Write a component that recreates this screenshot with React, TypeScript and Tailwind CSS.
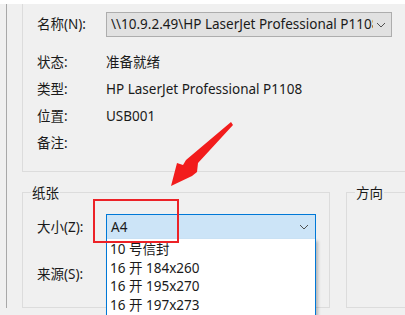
import React from "react";

const FONT = {
  fontFamily: '"Segoe UI", "Noto Sans", "Noto Sans CJK SC", sans-serif',
};

function Chevron({ className = "" }: { className?: string }) {
  return (
    <svg width="10" height="6" viewBox="0 0 10 6" className={className}>
      <path d="M1 1 L5 5 L9 1" fill="none" stroke="#505050" strokeWidth="1" />
    </svg>
  );
}

function InfoRow({ label, value }: { label: string; value?: string }) {
  return (
    <div className="flex h-[27px] items-center">
      <span className="w-[69px] shrink-0">{label}</span>
      <span>{value}</span>
    </div>
  );
}

const PAPER_SIZES = ["10 号信封", "16 开 184x260", "16 开 195x270", "16 开 197x273"];

export default function App() {
  return (
    <div
      className="relative h-[315px] w-[405px] overflow-hidden bg-[#f0f0f0] text-[13.5px] text-[#1a1a1a]"
      style={FONT}
    >
      {/* top white strip */}
      <div className="h-[4px] bg-white" />

      <div className="flex">
        {/* left window edge */}
        <div className="w-[7px] shrink-0 border-r border-[#a8a8a8]" />

        <div className="flex-1 pl-[15px]">
          {/* printer group */}
          <div className="w-[420px] border-b border-l border-[#dcdcdc] pb-[14px] pl-[14px] pt-[8px]">
            <div className="flex h-[25px] items-center">
              <span className="w-[69px] shrink-0">名称(N):</span>
              <div className="flex h-[25px] w-[286px] items-center border border-[#adadad] bg-[#e1e1e1] pl-[4px] pr-[5px]">
                <span className="flex-1 overflow-hidden whitespace-nowrap">
                  \\10.9.2.49\HP LaserJet Professional P1108
                </span>
                <Chevron className="ml-[3px] shrink-0" />
              </div>
            </div>
            <div className="mt-[12px]">
              <InfoRow label="状态:" value="准备就绪" />
              <InfoRow label="类型:" value="HP LaserJet Professional P1108" />
              <InfoRow label="位置:" value="USB001" />
              <InfoRow label="备注:" />
            </div>
          </div>

          {/* paper + orientation groups */}
          <div className="mt-[20px] flex gap-[16px]">
            <div className="relative h-[116px] w-[308px] shrink-0 border border-[#dcdcdc] pl-[14px] pt-[21px]">
              <span className="absolute -top-[10px] left-[8px] bg-[#f0f0f0] px-[1px]">纸张</span>
              <div className="flex h-[26px] items-center">
                <span className="w-[69px] shrink-0">大小(Z):</span>
                <div className="flex h-[26px] w-[210px] items-center border border-[#0078d7] bg-[#cce4f7] pl-[4px] pr-[6px]">
                  <span className="flex-1">A4</span>
                  <Chevron />
                </div>
              </div>
              <div className="mt-[21px] flex h-[26px] items-center">
                <span className="w-[69px] shrink-0">来源(S):</span>
              </div>
            </div>
            <div className="relative h-[116px] w-[80px] shrink-0 border border-[#dcdcdc]">
              <span className="absolute -top-[10px] left-[8px] bg-[#f0f0f0] px-[1px]">方向</span>
            </div>
          </div>
        </div>
      </div>

      {/* open dropdown list */}
      <div className="absolute left-[106px] top-[239px] h-[90px] w-[210px] border-x border-b border-[#0078d7] bg-white pl-[3px] pt-[1px] shadow-[2px_2px_3px_rgba(0,0,0,0.25)]">
        {PAPER_SIZES.map((s) => (
          <div key={s} className="flex h-[18.5px] items-center text-[13.5px]">
            {s}
          </div>
        ))}
      </div>

      {/* annotation: red box */}
      <div className="absolute left-[93px] top-[199px] h-[44px] w-[86px] border-[2.5px] border-[#ec2227]" />

      {/* annotation: red arrow */}
      <svg className="absolute left-0 top-0" width="405" height="315" viewBox="0 0 405 315">
        <polygon
          points="231,122 233,125 198,163 197,172 192,176 171,186 177,163 183,165 186,160"
          fill="#f21c1c"
        />
      </svg>
    </div>
  );
}
